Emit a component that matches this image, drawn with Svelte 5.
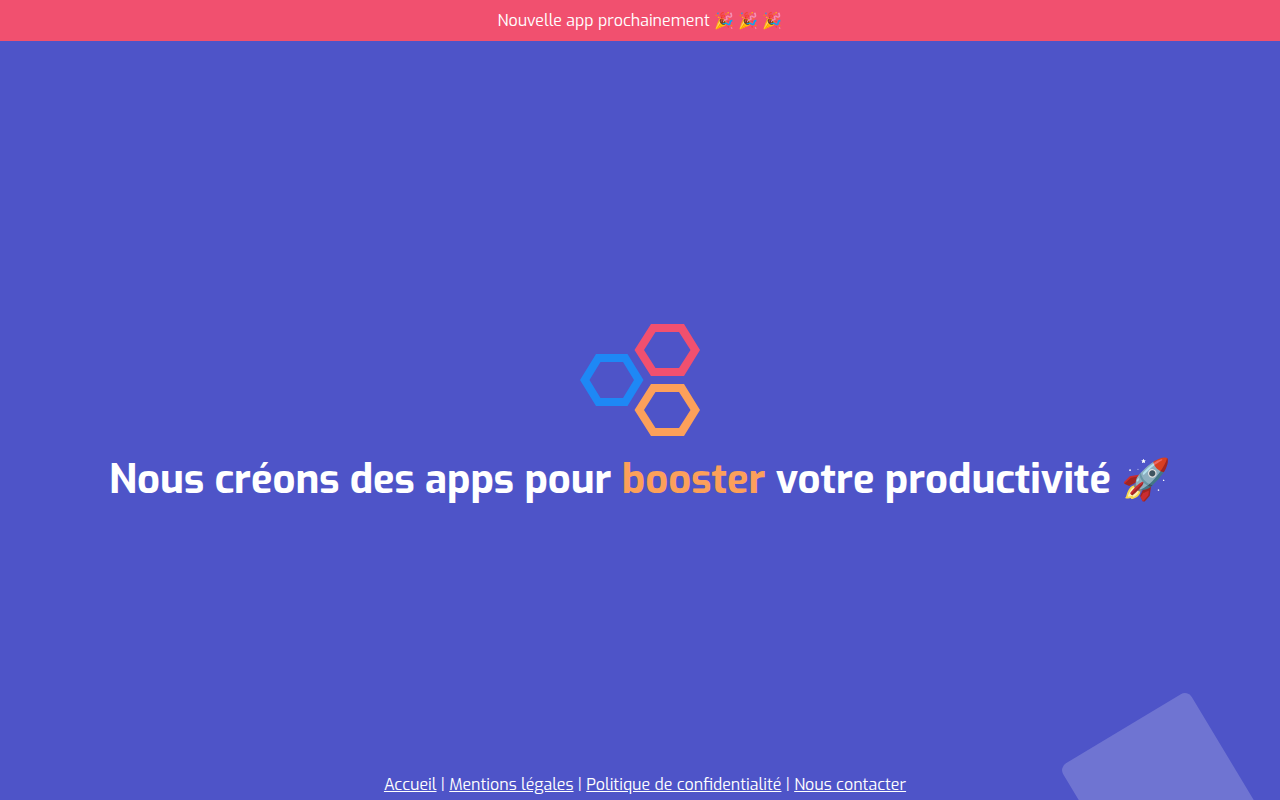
<script lang="ts">
	const links = [
		{ label: 'Accueil', href: '/' },
		{ label: 'Mentions légales', href: '/mentions-legales' },
		{ label: 'Politique de confidentialité', href: '/confidentialite' },
		{ label: 'Nous contacter', href: '/contact' }
	];
</script>

<div class="page">
	<div class="banner">Nouvelle app prochainement 🎉 🎉 🎉</div>

	<main class="hero">
		<svg class="logo" viewBox="0 0 120 112" aria-hidden="true">
			<path
				fill="#1e88f5"
				fill-rule="evenodd"
				d="M0 56 16 30H47.500L63.500 56 47.500 82H16ZM9.500 56 20.500 74H43L54 56 43 38H20.500Z"
			/>
			<path
				fill="#f1506f"
				fill-rule="evenodd"
				d="M54.500 26 71 0H104L120 26 104 52H71ZM64 26 75.500 44H99L110.500 26 99 8H75.500Z"
			/>
			<path
				fill="#fca05a"
				fill-rule="evenodd"
				d="M54.500 86 71 60H104L120 86 104 112H71ZM64 86 75.500 104H99L110.500 86 99 68H75.500Z"
			/>
		</svg>
		<h1>Nous créons des apps pour <span class="accent">booster</span> votre productivité 🚀</h1>
	</main>

	<footer class="footer">
		{#each links as link, i}
			{#if i > 0}{' | '}{/if}<a href={link.href}>{link.label}</a>
		{/each}
	</footer>

	<div class="square"></div>
</div>

<style>
	:global(body) {
		background: #4e54c8;
	}

	.page {
		position: relative;
		display: flex;
		flex-direction: column;
		min-height: 100vh;
		overflow: hidden;
		background: #4e54c8;
		color: #fff;
		font-family: Exo, 'Exo 2', Roboto, 'Noto Color Emoji', sans-serif;
		font-size: 16px;
		line-height: 21px;
	}

	.banner {
		padding: 10px;
		background: #f1506f;
		text-align: center;
	}

	.hero {
		flex: 1;
		display: flex;
		flex-direction: column;
		align-items: center;
		justify-content: center;
		padding-top: 16px;
		text-align: center;
	}

	.logo {
		width: 120px;
		height: 112px;
	}

	h1 {
		margin: 16px 0 0;
		font-size: 40px;
		font-weight: 700;
		line-height: 56px;
	}

	.accent {
		color: #fca05a;
	}

	.footer {
		position: relative;
		z-index: 1;
		padding: 0 0 5px 10px;
		text-align: center;
	}

	.footer a {
		color: inherit;
	}

	.square {
		position: absolute;
		right: 43px;
		bottom: -68px;
		width: 150px;
		height: 150px;
		border-radius: 8px;
		background: rgba(255, 255, 255, 0.19);
		transform: rotate(-31deg);
	}
</style>
